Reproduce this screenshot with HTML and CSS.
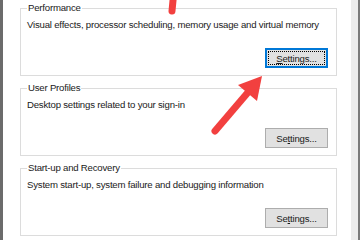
FILE: index.html
```html
<!DOCTYPE html>
<html lang="en">
<head>
    <meta charset="UTF-8">
    <meta name="viewport" content="width=device-width, initial-scale=1.0">
    <title>System Properties - Advanced</title>
    <link rel="stylesheet" href="styles.css">
</head>
<body>
    <div class="edge-left"></div>

    <!-- Advanced tab page -->
    <div class="page">
        <fieldset class="group">
            <legend>Performance</legend>
            <p class="desc">Visual effects, processor scheduling, memory usage and virtual memory</p>
            <div class="actions">
                <button class="btn focused"><u>S</u>ettings...</button>
            </div>
        </fieldset>

        <fieldset class="group">
            <legend>User Profiles</legend>
            <p class="desc">Desktop settings related to your sign-in</p>
            <div class="actions">
                <button class="btn">Se<u>t</u>tings...</button>
            </div>
        </fieldset>

        <fieldset class="group">
            <legend>Start-up and Recovery</legend>
            <p class="desc">System start-up, system failure and debugging information</p>
            <div class="actions">
                <button class="btn">Se<u>t</u>tings...</button>
            </div>
        </fieldset>
    </div>

    <div class="edge-right"></div>
    <div class="edge-dark"></div>

    <!-- red annotation arrows drawn over the screenshot -->
    <svg class="arrows" width="360" height="240" viewBox="0 0 360 240">
        <line x1="174" y1="-10" x2="172" y2="11" stroke="#f2403f" stroke-width="7" stroke-linecap="round"/>
        <line x1="215" y1="131" x2="250" y2="90" stroke="#f2403f" stroke-width="7" stroke-linecap="round"/>
        <polygon points="262,76 257,101 238,85" fill="#f2403f"/>
    </svg>
</body>
</html>
```

FILE: styles.css
```css
* {
    margin: 0;
    padding: 0;
    box-sizing: border-box;
}

body {
    width: 360px;
    height: 240px;
    overflow: hidden;
    display: flex;
    background: #ffffff;
    font-family: "Liberation Sans", Arial, sans-serif;
    font-size: 9.6px;
    letter-spacing: -0.2px;
    color: #1a1a1a;
    position: relative;
}

.edge-left {
    width: 3px;
    background: #6b6b6b;
}

.page {
    width: 348px;
    padding-left: 17px;
    display: flex;
    flex-direction: column;
    gap: 4px;
}

.edge-right {
    width: 7px;
    background: #ececec;
}

.edge-dark {
    width: 2px;
    background: #7a7a7a;
}

.group {
    width: 317px;
    height: 76px;
    border: 1px solid #dcdcdc;
    padding: 0 8px 0 6px;
}

.group legend {
    line-height: 16px;
    padding: 0 1px;
    margin-left: 0;
}

.desc {
    line-height: 14px;
    margin-top: 2px;
    white-space: nowrap;
}

.actions {
    display: flex;
    justify-content: flex-end;
    margin-top: 16px;
}

.btn {
    width: 63px;
    height: 20px;
    font-family: inherit;
    font-size: 9.6px;
    letter-spacing: inherit;
    color: #1a1a1a;
    background: #e1e1e1;
    border: 1px solid #adadad;
}

.btn.focused {
    border: 2px solid #0078d7;
    outline: 1px dotted #000;
    outline-offset: -4px;
}

.arrows {
    position: absolute;
    left: 0;
    top: 0;
    pointer-events: none;
}
```
